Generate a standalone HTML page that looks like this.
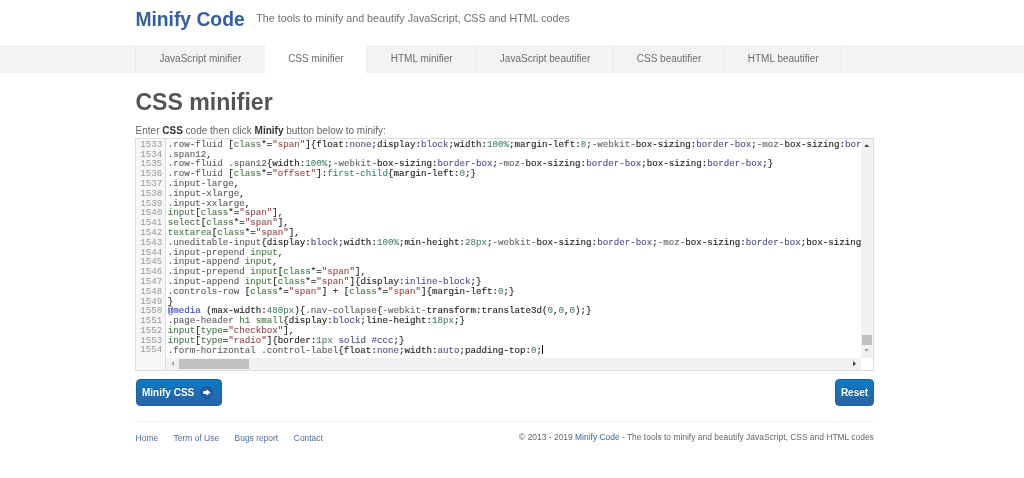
<!DOCTYPE html>
<html>
<head>
<meta charset="utf-8">
<title>CSS minifier</title>
<style>
html,body{margin:0;padding:0;}
body{width:1024px;height:478px;overflow:hidden;background:#fff;font-family:"Liberation Sans",sans-serif;color:#555;position:relative;}
a{text-decoration:none;color:#3b68a6;}
#wrap{position:absolute;left:0;top:0;width:1024px;height:478px;will-change:transform;}
.abs{position:absolute;white-space:nowrap;}
#brand{left:135.4px;top:8.8px;font-size:19.3px;font-weight:bold;color:#335f9f;line-height:22px;}
#tag{left:256.3px;top:11.8px;font-size:10.73px;color:#707070;line-height:13px;}
#nav{left:0;top:45px;width:1024px;height:28px;background:#f3f3f3;}
#tabs{left:135.2px;top:45px;height:28px;display:flex;}
#tabs div{box-sizing:border-box;height:28px;line-height:27.6px;font-size:10px;color:#6c6c6c;text-align:center;border-left:1px solid #e9e9e9;}
#tabs div.last{border-right:1px solid #e9e9e9;}
#tabs div.act{background:#fff;border-left-color:#fff;}
h1{margin:0;left:135.4px;top:89px;font-size:23.1px;line-height:27px;font-weight:bold;color:#555;}
#intro{left:135.6px;top:125.3px;font-size:10px;line-height:12px;color:#666;}
#intro b{color:#333;}
#ed{left:135px;top:138px;width:739px;height:233px;box-sizing:border-box;border:1px solid #ddd;background:#fff;overflow:hidden;}
#gut{left:0;top:0;width:29px;height:231px;background:#f7f7f7;border-right:1px solid #ddd;}
#nums{left:0;top:0.75px;width:26.3px;text-align:right;color:#999;}
#nums,#code{font-family:"Liberation Mono",monospace;font-size:9.2px;letter-spacing:-0.01px;line-height:9.81px;}
#code{-webkit-text-stroke:0.12px;left:31.7px;top:0.75px;width:692.9px;overflow:hidden;color:#222;}
#code div,#nums div{height:9.81px;white-space:pre;}
.q{color:#606060}.t{color:#4a7c4a}.s{color:#9a4a4a}.p{color:#222}.a{color:#50508a}.n{color:#4d8570}.m{color:#686868}.d{color:#3a4ac0}.v{color:#3f8868}
.cur{display:inline-block;width:0;height:9px;border-left:1px solid #000;vertical-align:-1.5px;}
#vs{left:724.6px;top:0;width:12.9px;height:219px;background:#f1f1f1;}
#vthumb{left:1.2px;top:195.8px;width:10.5px;height:10.2px;background:#c1c1c1;}
#hs{left:30px;top:219px;width:694.6px;height:11.5px;background:#f1f1f1;}
#hthumb{left:13.2px;top:1px;width:70px;height:9.6px;background:#c1c1c1;}
.btn{box-sizing:border-box;height:27px;border-radius:4px;background:linear-gradient(#0b7bc6,#2a62a5);border:1px solid #1f5f9f;color:#fff;font-weight:bold;font-size:10px;line-height:25.4px;text-shadow:0 -1px 0 rgba(0,0,0,.25);}
#b1{left:136px;top:379px;width:85.7px;}
#b1 span{position:absolute;left:5px;top:0;}
#b2{left:835px;top:379px;width:39px;text-align:center;}
#hr{left:135.4px;top:420.5px;width:738px;height:1px;background:#eee;}
.fl{top:432.6px;font-size:8.45px;line-height:10px;color:#4a6ea5;}
#fr{right:150.2px;top:432.1px;font-size:8.45px;line-height:10px;color:#666;}
</style>
</head>
<body>
<div id="wrap">
<div id="brand" class="abs">Minify Code</div>
<div id="tag" class="abs">The tools to minify and beautify JavaScript, CSS and HTML codes</div>
<div id="nav" class="abs"></div>
<div id="tabs" class="abs">
<div style="width:129.4px">JavaScript minifier</div><div class="act" style="width:101.7px">CSS minifier</div><div style="width:109.9px">HTML minifier</div><div style="width:137px">JavaScript beautifier</div><div style="width:110.7px">CSS beautifier</div><div class="last" style="width:118.6px">HTML beautifier</div>
</div>
<h1 class="abs">CSS minifier</h1>
<div id="intro" class="abs">Enter <b>CSS</b> code then click <b>Minify</b> button below to minify:</div>
<div id="ed" class="abs">
 <div id="gut" class="abs"></div>
 <div id="nums" class="abs"><div>1533</div><div>1534</div><div>1535</div><div>1536</div><div>1537</div><div>1538</div><div>1539</div><div>1540</div><div>1541</div><div>1542</div><div>1543</div><div>1544</div><div>1545</div><div>1546</div><div>1547</div><div>1548</div><div>1549</div><div>1550</div><div>1551</div><div>1552</div><div>1553</div><div>1554</div></div>
 <div id="code" class="abs"><div><span class="q">.row-fluid</span> [<span class="t">class</span>*=<span class="s">"span"</span>]{<span class="p">float</span>:<span class="a">none</span>;<span class="p">display</span>:<span class="a">block</span>;<span class="p">width</span>:<span class="n">100%</span>;<span class="p">margin-left</span>:<span class="n">0</span>;<span class="m">-webkit-</span><span class="p">box-sizing</span>:<span class="a">border-box</span>;<span class="m">-moz-</span><span class="p">box-sizing</span>:<span class="a">border-box</span>;<span class="p">box-sizing</span>:<span class="a">border-box</span>;}</div><div><span class="q">.span12</span>,</div><div><span class="q">.row-fluid</span> <span class="q">.span12</span>{<span class="p">width</span>:<span class="n">100%</span>;<span class="m">-webkit-</span><span class="p">box-sizing</span>:<span class="a">border-box</span>;<span class="m">-moz-</span><span class="p">box-sizing</span>:<span class="a">border-box</span>;<span class="p">box-sizing</span>:<span class="a">border-box</span>;}</div><div><span class="q">.row-fluid</span> [<span class="t">class</span>*=<span class="s">"offset"</span>]:<span class="v">first-child</span>{<span class="p">margin-left</span>:<span class="n">0</span>;}</div><div><span class="q">.input-large</span>,</div><div><span class="q">.input-xlarge</span>,</div><div><span class="q">.input-xxlarge</span>,</div><div><span class="t">input</span>[<span class="t">class</span>*=<span class="s">"span"</span>],</div><div><span class="t">select</span>[<span class="t">class</span>*=<span class="s">"span"</span>],</div><div><span class="t">textarea</span>[<span class="t">class</span>*=<span class="s">"span"</span>],</div><div><span class="q">.uneditable-input</span>{<span class="p">display</span>:<span class="a">block</span>;<span class="p">width</span>:<span class="n">100%</span>;<span class="p">min-height</span>:<span class="n">28px</span>;<span class="m">-webkit-</span><span class="p">box-sizing</span>:<span class="a">border-box</span>;<span class="m">-moz-</span><span class="p">box-sizing</span>:<span class="a">border-box</span>;<span class="p">box-sizing</span>:<span class="a">border-box</span>;}</div><div><span class="q">.input-prepend</span> <span class="t">input</span>,</div><div><span class="q">.input-append</span> <span class="t">input</span>,</div><div><span class="q">.input-prepend</span> <span class="t">input</span>[<span class="t">class</span>*=<span class="s">"span"</span>],</div><div><span class="q">.input-append</span> <span class="t">input</span>[<span class="t">class</span>*=<span class="s">"span"</span>]{<span class="p">display</span>:<span class="a">inline-block</span>;}</div><div><span class="q">.controls-row</span> [<span class="t">class</span>*=<span class="s">"span"</span>] + [<span class="t">class</span>*=<span class="s">"span"</span>]{<span class="p">margin-left</span>:<span class="n">0</span>;}</div><div>}</div><div><span class="d">@media</span> (<span class="p">max-width</span>:<span class="n">480px</span>){<span class="q">.nav-collapse</span>{<span class="m">-webkit-</span><span class="p">transform</span>:<span class="p">translate3d</span>(<span class="n">0</span>,<span class="n">0</span>,<span class="n">0</span>);}</div><div><span class="q">.page-header</span> <span class="t">h1</span> <span class="t">small</span>{<span class="p">display</span>:<span class="a">block</span>;<span class="p">line-height</span>:<span class="n">18px</span>;}</div><div><span class="t">input</span>[<span class="t">type</span>=<span class="s">"checkbox"</span>],</div><div><span class="t">input</span>[<span class="t">type</span>=<span class="s">"radio"</span>]{<span class="p">border</span>:<span class="n">1px</span> <span class="a">solid</span> <span class="a">#ccc</span>;}</div><div><span class="q">.form-horizontal</span> <span class="q">.control-label</span>{<span class="p">float</span>:<span class="a">none</span>;<span class="p">width</span>:<span class="a">auto</span>;<span class="p">padding-top</span>:<span class="n">0</span>;<i class="cur"></i></div></div>
 <div id="vs" class="abs"><div id="vthumb" class="abs"></div>
  <svg class="abs" style="left:3.7px;top:5.2px" width="5.4" height="3.2" viewBox="0 0 5.4 3.2"><path d="M0 3.2 L2.7 0.2 L5.4 3.2 Z" fill="#404040"/></svg>
  <svg class="abs" style="left:3.9px;top:210.3px" width="5" height="3" viewBox="0 0 5 3"><path d="M0 0 L2.5 2.8 L5 0 Z" fill="#a3a3a3"/></svg>
 </div>
 <div id="hs" class="abs"><div id="hthumb" class="abs"></div>
  <svg class="abs" style="left:4.6px;top:3.2px" width="3" height="5" viewBox="0 0 3 5"><path d="M3 0 L0.3 2.5 L3 5 Z" fill="#a3a3a3"/></svg>
  <svg class="abs" style="left:686.6px;top:3px" width="3.2" height="5.4" viewBox="0 0 3.2 5.4"><path d="M0 0 L3 2.7 L0 5.4 Z" fill="#404040"/></svg>
 </div>
</div>
<div id="b1" class="abs btn"><span>Minify CSS</span>
 <svg class="abs" style="left:63.2px;top:6px" width="13" height="13" viewBox="0 0 13 13"><circle cx="6.5" cy="6.5" r="6.4" fill="#1c5496" fill-opacity="0.7"/><path d="M3.2 5.1 H6.6 V3.2 L10.6 6.5 L6.6 9.8 V7.9 H3.2 Z" fill="#fff"/></svg>
</div>
<div id="b2" class="abs btn">Reset</div>
<div id="hr" class="abs"></div>
<div class="abs fl" style="left:135.6px">Home</div>
<div class="abs fl" style="left:173.6px">Term of Use</div>
<div class="abs fl" style="left:234.6px">Bugs report</div>
<div class="abs fl" style="left:293.8px">Contact</div>
<div id="fr" class="abs">© 2013 - 2019 <a>Minify Code</a> - The tools to minify and beautify JavaScript, CSS and HTML codes</div>
</div>
</body>
</html>
